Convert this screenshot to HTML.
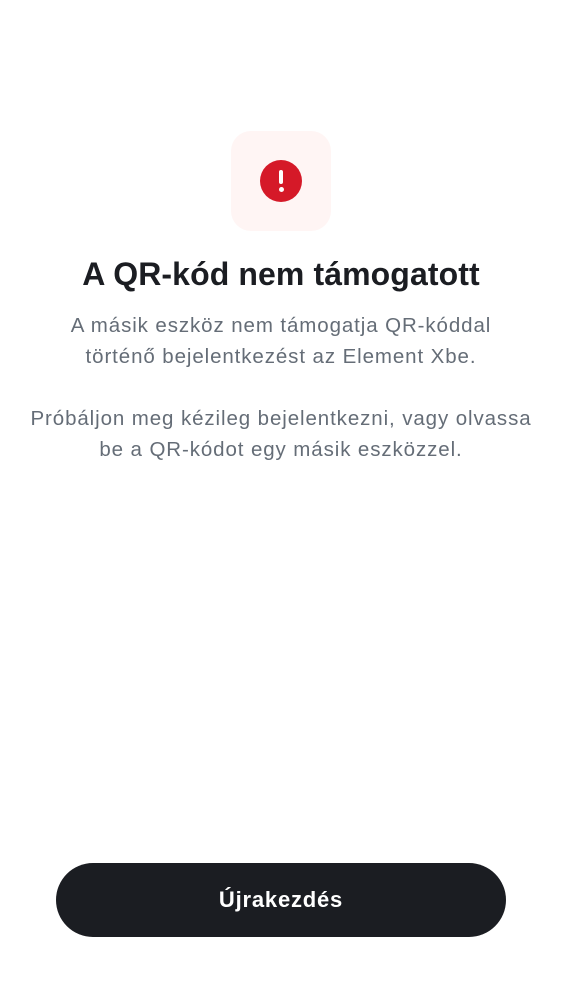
<!DOCTYPE html>
<html><head><meta charset="utf-8"><style>
body{margin:0;width:562px;height:1000px;background:#fff;font-family:"Liberation Sans",sans-serif;position:relative}
.box{position:absolute;left:231px;top:131px;width:100px;height:100px;border-radius:20px;background:#fff5f4}
.c{position:absolute;left:260px;top:160px;width:42px;height:42px;border-radius:50%;background:#d51928}
.c i{position:absolute;left:19px;top:10px;width:4px;height:14px;background:#fff;border-radius:2px}
.c b{position:absolute;left:19px;top:27px;width:5px;height:5px;background:#fff;border-radius:50%}
h1{position:absolute;top:256px;left:0;width:562px;text-align:center;margin:0;font-size:32px;color:#1b1d22;font-weight:bold;letter-spacing:0.1px}
p{position:absolute;left:0;width:562px;text-align:center;margin:0;font-size:20.5px;line-height:31px;color:#656d77;letter-spacing:0.9px}
.btn{position:absolute;left:56px;top:863px;width:450px;height:74px;border-radius:37px;background:#1b1d22;color:#fff;font-size:22px;font-weight:bold;text-align:center;line-height:74px;letter-spacing:0.8px}
</style></head><body>
<div class="box"></div><div class="c"><i></i><b></b></div>
<h1>A QR-kód nem támogatott</h1>
<p style="top:310px">A másik eszköz nem támogatja QR-kóddal<br>történő bejelentkezést az Element Xbe.</p>
<p style="top:403px">Próbáljon meg kézileg bejelentkezni, vagy olvassa<br>be a QR-kódot egy másik eszközzel.</p>
<div class="btn">Újrakezdés</div>
</body></html>
